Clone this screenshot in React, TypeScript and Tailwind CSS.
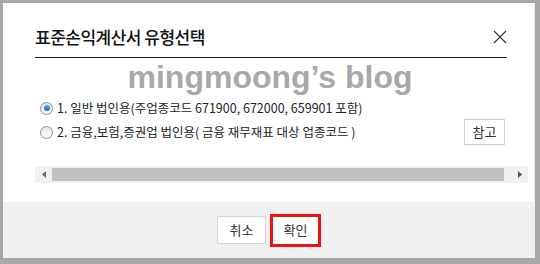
import React from 'react';

const kr = { fontFamily: '"Noto Sans CJK KR", "Noto Sans", sans-serif' };

// Radio Component
interface RadioProps {
  checked?: boolean;
  label: string;
}

const Radio = ({ checked, label }: RadioProps) => (
  <label className="flex items-center gap-[4px] pl-[5px] text-[12.5px] text-[#222] leading-none">
    <span className="flex h-[13px] w-[13px] items-center justify-center rounded-full border border-[#8f8f8f] bg-gradient-to-b from-[#e6e6e6] to-white">
      {checked && (
        <span className="h-[6px] w-[6px] rounded-full bg-gradient-to-b from-[#5aa2ee] to-[#1b64c8]" />
      )}
    </span>
    <span className="whitespace-nowrap">{label}</span>
  </label>
);

const App = () => {
  return (
    <div className="h-[264px] w-[540px] bg-[#a8a8a8] pb-[6px] pl-[3px] pr-[5px] pt-[3px]" style={kr}>
      <div className="flex h-full flex-col bg-white">
        {/* Body */}
        <div className="flex-1 border-r border-[#ececec] pl-[32px] pr-[3px]">
          {/* Header */}
          <div className="mr-[24px] flex items-center justify-between border-b border-[#1a1a1a] pb-[8px] pt-[22px]">
            <h1 className="text-[17px] font-medium leading-[24px] tracking-[-0.5px] text-[#111]">
              표준손익계산서 유형선택
            </h1>
            <svg width="14" height="14" viewBox="0 0 14 14">
              <path d="M1 1 L13 13 M13 1 L1 13" stroke="#333" strokeWidth="1.1" fill="none" />
            </svg>
          </div>

          {/* Watermark */}
          <div
            className="mr-[26px] mt-[3px] text-center text-[32px] font-bold leading-[32px] text-[#a8a8a8]"
            style={{ fontFamily: '"Liberation Sans", Arial, sans-serif' }}
          >
            mingmoong’s blog
          </div>

          {/* Options */}
          <div className="mt-[4px]">
            <div className="flex h-[22px] items-center">
              <Radio checked label="1. 일반 법인용(주업종코드 671900, 672000, 659901 포함)" />
            </div>
            <div className="flex h-[26px] items-center justify-between pr-[26px]">
              <Radio label="2. 금융,보험,증권업 법인용( 금융 재무재표 대상 업종코드 )" />
              <button className="h-[26px] w-[41px] border border-[#cfcfcf] bg-white text-[13px] text-[#333]">
                참고
              </button>
            </div>
          </div>

          {/* Horizontal scrollbar */}
          <div className="mt-[21px] flex h-[17px] w-[493px] items-center bg-[#f0f0f0]">
            <div className="flex h-full w-[17px] items-center justify-center">
              <svg width="4" height="7" viewBox="0 0 4 7">
                <path d="M4 0 L0 3.5 L4 7 Z" fill="#6a6a6a" />
              </svg>
            </div>
            <div className="h-[13px] w-[452px] bg-[#c1c1c1]" />
            <div className="flex-1" />
            <div className="flex h-full w-[17px] items-center justify-center">
              <svg width="4" height="7" viewBox="0 0 4 7">
                <path d="M0 0 L4 3.5 L0 7 Z" fill="#505050" />
              </svg>
            </div>
          </div>
        </div>

        {/* Footer */}
        <div className="flex h-[56px] items-center justify-center gap-[4px] bg-[#f0f0f0]">
          <button className="h-[28px] w-[49px] border border-[#d4d4d4] bg-white text-[13px] text-[#333]">
            취소
          </button>
          <button className="h-[33px] w-[51px] border-[3px] border-[#ee1111] bg-white text-[13px] text-[#333]">
            확인
          </button>
        </div>
      </div>
    </div>
  );
};

export default App;
